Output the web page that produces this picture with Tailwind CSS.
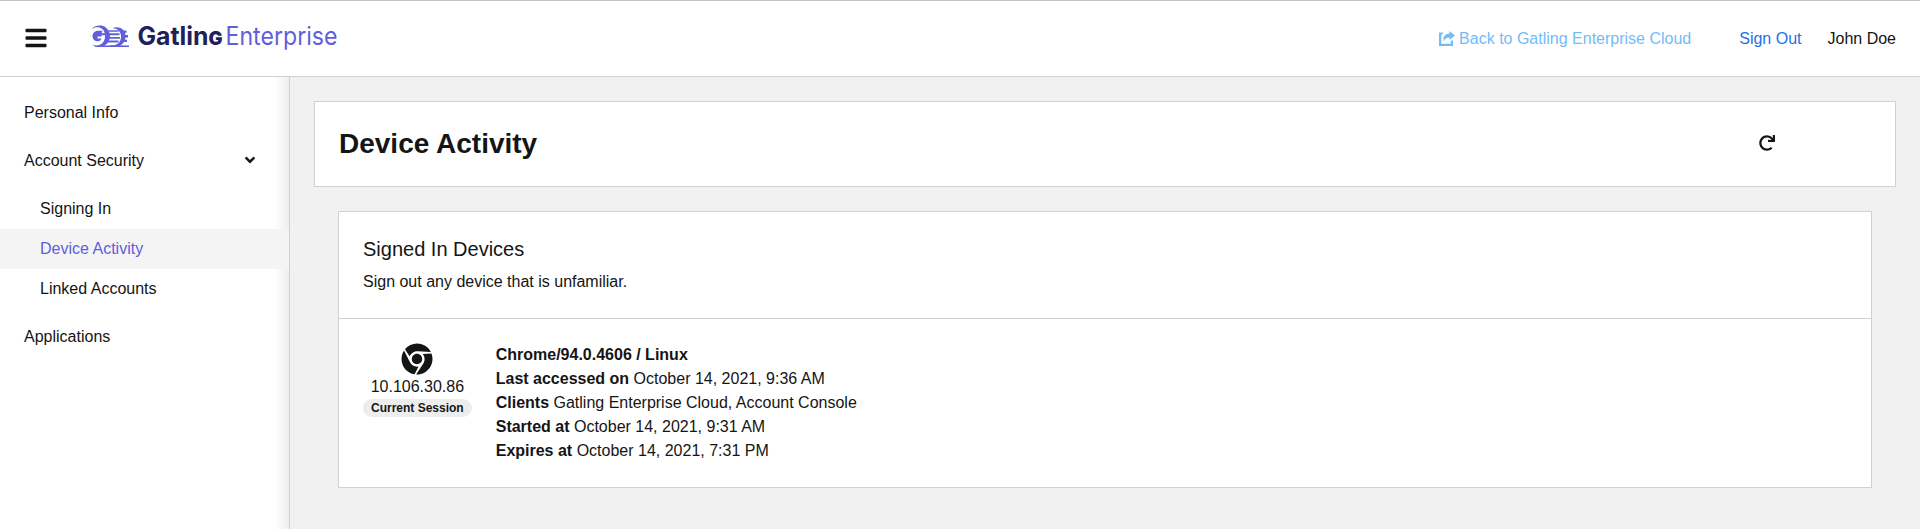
<!DOCTYPE html>
<html lang="en">
<head>
<meta charset="utf-8">
<title>Device Activity</title>
<script src="https://cdn.jsdelivr.net/npm/@tailwindcss/browser@4"></script>
</head>
<body class="flex h-[529px] flex-col overflow-hidden bg-[#f1f1f1] font-['Liberation_Sans',Arial,sans-serif] text-base leading-6 text-[#151515]">
<header class="flex h-[77px] shrink-0 items-center border-t border-b border-t-[#c6c2bd] border-b-[#d0d0d5] bg-white pr-6 pl-[25px]">
  <svg class="mb-px h-6 w-[22px]" viewBox="0 0 448 512" fill="currentColor"><path d="M16 132h416c8.800 0 16-7.200 16-16V76c0-8.800-7.200-16-16-16H16C7.200 60 0 67.200 0 76v40c0 8.800 7.200 16 16 16zm0 160h416c8.800 0 16-7.200 16-16v-40c0-8.800-7.200-16-16-16H16c-8.800 0-16 7.200-16 16v40c0 8.800 7.200 16 16 16zm0 160h416c8.800 0 16-7.200 16-16v-40c0-8.800-7.200-16-16-16H16c-8.800 0-16 7.200-16 16v40c0 8.800 7.200 16 16 16z"/></svg>
  <svg class="ml-[43px] h-[52px] w-[260px] overflow-visible" viewBox="90 12.500 260 52">
    <g fill="#6060db">
      <path d="M91.500 28.500C94 25.500 98 24.500 101.500 25C106.500 26 110 30.500 110 35.500C110 40 107.500 43.500 104.500 45H129V46.500H95.500L92 43.700C96 46 100 45 102.500 42.500C106 39 106 32 102.500 28.800C99.500 26 95.500 26.200 91.500 28.500Z"/>
      <path d="M98 30.300H102.500L101.500 32.800H119.500V34.800H101.500V36H97.500V38H101.700C100.700 40.200 98.800 41 97 40.800C94.500 40.500 92.500 38.200 92.500 35.700C92.500 32.800 95 30.300 98 30.300Z"/>
      <path d="M108.500 29.700H118.500V31.200H109.200ZM109.500 36.500H120V38.300H109ZM107.500 40H118.500V42H106Z"/>
      <path d="M112.500 27.800C116 26 121 26.700 123.700 30H126.500V32.300H125L125.500 34.500H128V37H125.500L125 39.300H127V41.500H124C122.800 43.500 121.500 44.500 120 45.200L129 45.500V46.500H110V44.800C114 45 117 44.300 119 42C121.800 38.800 121.800 33.200 118.700 30.200C117 28.500 115 27.800 112.500 27.800Z"/>
    </g>
    <text x="137.500" y="44.700" class="fill-[#20215a] font-['Inter',sans-serif] text-[25px] font-bold" textLength="85" lengthAdjust="spacingAndGlyphs">Gatlin<tspan class="[font-variant-caps:small-caps]">g</tspan></text>
    <text x="225.500" y="44.700" class="fill-[#6060db] font-['Inter',sans-serif] text-[25px] font-normal" textLength="112" lengthAdjust="spacingAndGlyphs">Enterprise</text>
  </svg>
  <nav class="ml-auto flex items-center">
    <a class="flex items-center gap-1 text-[#73bcf7]">
      <svg class="h-4 w-4" viewBox="0 0 16 16" fill="currentColor"><path d="M0 1.500H4.500L3 3.800H2.300V12.700H11.700V10.200L14 9V15H0Z"/><path d="M10.500 0L16 4.500L10.500 9V6.500C7.500 6.500 6 7.500 4.700 10.500C3.500 6 6 2.600 10.500 2.500Z"/></svg>
      <span>Back to Gatling Enterprise Cloud</span>
    </a>
    <a class="ml-12 text-[#1a73e8]">Sign Out</a>
    <span class="ml-[26px]">John Doe</span>
  </nav>
</header>
<div class="flex min-h-0 flex-1">
  <aside class="w-[290px] shrink-0 border-r border-[#d0d0d5] bg-white bg-linear-to-l from-[#eeeeee] to-white to-[14px] pt-6">
    <div class="px-6">Personal Info</div>
    <div class="mt-6 flex items-center justify-between pr-[34px] pl-6">Account Security
      <svg class="mb-0.5 h-4 w-2.5" viewBox="0 0 320 512" fill="currentColor"><path d="M143 352.300L7 216.300c-9.400-9.400-9.400-24.600 0-33.900l22.600-22.600c9.400-9.400 24.600-9.400 33.900 0l96.400 96.400 96.400-96.400c9.400-9.400 24.600-9.400 33.900 0l22.600 22.600c9.400 9.400 9.400 24.600 0 33.900l-136 136c-9.200 9.400-24.400 9.400-33.800 0z"/></svg>
    </div>
    <div class="mt-4">
      <div class="py-2 pl-10">Signing In</div>
      <div class="bg-[#f4f4f4] py-2 pl-10 text-[#6060db]">Device Activity</div>
      <div class="py-2 pl-10">Linked Accounts</div>
    </div>
    <div class="mt-4 px-6">Applications</div>
  </aside>
  <main class="min-w-0 flex-1 p-6">
    <section class="flex h-[86px] items-center justify-between border border-[#d0d0d5] bg-white pr-[120px] pl-6">
      <h1 class="text-[28px] leading-9 font-bold">Device Activity</h1>
      <svg class="mb-0.5 h-4 w-4" viewBox="0 0 512 512" fill="currentColor"><path d="M500.330 0h-47.410a12 12 0 0 0-12 12.570l4 82.760A247.420 247.420 0 0 0 256 8C119.340 8 7.900 119.530 8 256.190 8.100 393.070 119.100 504 256 504a247.100 247.100 0 0 0 166.180-63.910 12 12 0 0 0 .48-17.430l-34-34a12 12 0 0 0-16.380-.55A176 176 0 1 1 402.100 157.800l-101.530-4.870a12 12 0 0 0-12.570 12v47.410a12 12 0 0 0 12 12h200.330a12 12 0 0 0 12-12V12a12 12 0 0 0-12-12z"/></svg>
    </section>
    <section class="mx-6 mt-6 border border-[#d0d0d5] bg-white">
      <div class="border-b border-[#d0d0d5] p-6">
        <h2 class="text-xl leading-[26px]">Signed In Devices</h2>
        <p class="mt-2">Sign out any device that is unfamiliar.</p>
      </div>
      <div class="flex gap-6 p-6">
        <div class="flex flex-col items-center">
          <svg class="h-8 w-8" viewBox="0 0 496 512" fill="currentColor"><path d="M131.500 217.500L55.100 100.100c47.600-59.200 119-91.800 192-92.100 42.300-.3 85.500 10.500 124.800 33.200 43.400 25.200 76.400 61.400 97.400 103L264 133.400c-58.100-3.400-113.400 29.300-132.500 84.100zm32.900 38.500c0 46.200 37.400 83.600 83.600 83.600s83.600-37.400 83.600-83.600-37.400-83.600-83.600-83.600-83.600 37.300-83.600 83.600zm314.900-89.200L339.600 174c37.900 44.300 38.500 108.200 6.600 157.200L234.100 503.600c46.500 2.500 94.400-7.700 137.800-32.900 107.400-62 150.900-192 107.400-303.900zM133.700 303.600L40.400 120.100C14.900 159.100 0 205.900 0 256c0 124 90.800 226.700 209.500 244.900l63.700-124.800c-57.600 10.800-113.200-20.800-139.500-72.500z"/></svg>
          <div>10.106.30.86</div>
          <div class="rounded-full bg-[#ededed] px-2 text-xs leading-[18px] font-bold">Current Session</div>
        </div>
        <div>
          <p class="font-bold">Chrome/94.0.4606 / Linux</p>
          <p><b>Last accessed on</b> October 14, 2021, 9:36 AM</p>
          <p><b>Clients</b> Gatling Enterprise Cloud, Account Console</p>
          <p><b>Started at</b> October 14, 2021, 9:31 AM</p>
          <p><b>Expires at</b> October 14, 2021, 7:31 PM</p>
        </div>
      </div>
    </section>
  </main>
</div>
</body>
</html>
